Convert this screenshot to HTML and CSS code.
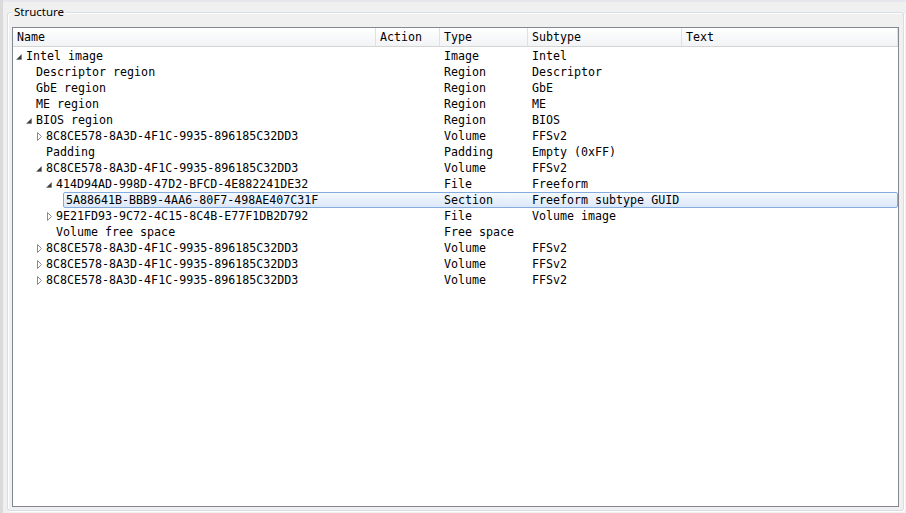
FILE: index.html
```html
<!DOCTYPE html>
<html>
<head>
<meta charset="utf-8">
<link rel="stylesheet" href="styles.css">
</head>
<body>
<div class="group">
  <span class="legend">Structure</span>
  <div class="tree">
    <div class="header">
      <div class="hcell">Name</div>
      <div class="hcell">Action</div>
      <div class="hcell">Type</div>
      <div class="hcell">Subtype</div>
      <div class="hcell">Text</div>
    </div>
    <div class="rows">
      <div class="row">
        <div class="cell name lv0"><span class="arrow"><svg width="10" height="16"><polygon class="open" points="0.5,11.5 5.5,6.5 5.5,11.5"/></svg></span>Intel image</div>
        <div class="cell"></div><div class="cell">Image</div><div class="cell">Intel</div><div class="cell"></div>
      </div>
      <div class="row">
        <div class="cell name lv1"><span class="arrow"></span>Descriptor region</div>
        <div class="cell"></div><div class="cell">Region</div><div class="cell">Descriptor</div><div class="cell"></div>
      </div>
      <div class="row">
        <div class="cell name lv1"><span class="arrow"></span>GbE region</div>
        <div class="cell"></div><div class="cell">Region</div><div class="cell">GbE</div><div class="cell"></div>
      </div>
      <div class="row">
        <div class="cell name lv1"><span class="arrow"></span>ME region</div>
        <div class="cell"></div><div class="cell">Region</div><div class="cell">ME</div><div class="cell"></div>
      </div>
      <div class="row">
        <div class="cell name lv1"><span class="arrow"><svg width="10" height="16"><polygon class="open" points="0.5,11.5 5.5,6.5 5.5,11.5"/></svg></span>BIOS region</div>
        <div class="cell"></div><div class="cell">Region</div><div class="cell">BIOS</div><div class="cell"></div>
      </div>
      <div class="row">
        <div class="cell name lv2"><span class="arrow"><svg width="10" height="16"><polygon class="closed" points="1.5,4.5 5.5,8.5 1.5,12.5"/></svg></span>8C8CE578-8A3D-4F1C-9935-896185C32DD3</div>
        <div class="cell"></div><div class="cell">Volume</div><div class="cell">FFSv2</div><div class="cell"></div>
      </div>
      <div class="row">
        <div class="cell name lv2"><span class="arrow"></span>Padding</div>
        <div class="cell"></div><div class="cell">Padding</div><div class="cell">Empty (0xFF)</div><div class="cell"></div>
      </div>
      <div class="row">
        <div class="cell name lv2"><span class="arrow"><svg width="10" height="16"><polygon class="open" points="0.5,11.5 5.5,6.5 5.5,11.5"/></svg></span>8C8CE578-8A3D-4F1C-9935-896185C32DD3</div>
        <div class="cell"></div><div class="cell">Volume</div><div class="cell">FFSv2</div><div class="cell"></div>
      </div>
      <div class="row">
        <div class="cell name lv3"><span class="arrow"><svg width="10" height="16"><polygon class="open" points="0.5,11.5 5.5,6.5 5.5,11.5"/></svg></span>414D94AD-998D-47D2-BFCD-4E882241DE32</div>
        <div class="cell"></div><div class="cell">File</div><div class="cell">Freeform</div><div class="cell"></div>
      </div>
      <div class="row selected">
        <div class="cell name lv4"><span class="arrow"></span>5A88641B-BBB9-4AA6-80F7-498AE407C31F</div>
        <div class="cell"></div><div class="cell">Section</div><div class="cell">Freeform subtype GUID</div><div class="cell"></div>
      </div>
      <div class="row">
        <div class="cell name lv3"><span class="arrow"><svg width="10" height="16"><polygon class="closed" points="1.5,4.5 5.5,8.5 1.5,12.5"/></svg></span>9E21FD93-9C72-4C15-8C4B-E77F1DB2D792</div>
        <div class="cell"></div><div class="cell">File</div><div class="cell">Volume image</div><div class="cell"></div>
      </div>
      <div class="row">
        <div class="cell name lv3"><span class="arrow"></span>Volume free space</div>
        <div class="cell"></div><div class="cell">Free space</div><div class="cell"></div><div class="cell"></div>
      </div>
      <div class="row">
        <div class="cell name lv2"><span class="arrow"><svg width="10" height="16"><polygon class="closed" points="1.5,4.5 5.5,8.5 1.5,12.5"/></svg></span>8C8CE578-8A3D-4F1C-9935-896185C32DD3</div>
        <div class="cell"></div><div class="cell">Volume</div><div class="cell">FFSv2</div><div class="cell"></div>
      </div>
      <div class="row">
        <div class="cell name lv2"><span class="arrow"><svg width="10" height="16"><polygon class="closed" points="1.5,4.5 5.5,8.5 1.5,12.5"/></svg></span>8C8CE578-8A3D-4F1C-9935-896185C32DD3</div>
        <div class="cell"></div><div class="cell">Volume</div><div class="cell">FFSv2</div><div class="cell"></div>
      </div>
      <div class="row">
        <div class="cell name lv2"><span class="arrow"><svg width="10" height="16"><polygon class="closed" points="1.5,4.5 5.5,8.5 1.5,12.5"/></svg></span>8C8CE578-8A3D-4F1C-9935-896185C32DD3</div>
        <div class="cell"></div><div class="cell">Volume</div><div class="cell">FFSv2</div><div class="cell"></div>
      </div>
    </div>
  </div>
</div>
</body>
</html>
```

FILE: styles.css
```css
html, body {
  margin: 0;
  padding: 0;
}
body {
  width: 906px;
  height: 513px;
  overflow: hidden;
  background: #f0f0f0;
  box-sizing: border-box;
  padding: 12px 0 0 7px;
  box-shadow: inset 3px 0 0 #dadada, inset 0 2px 0 #e6e6ee;
  font-family: "DejaVu Sans Mono", "Liberation Mono", monospace;
}
.group {
  position: relative;
  box-sizing: border-box;
  width: 897px;
  height: 499px;
  border: 1px solid #d5dfe5;
  border-radius: 3px;
  box-shadow: inset 1px 1px 0 #fff, 1px 1px 0 #fff;
  padding: 14px 0 0 4px;
}
.legend {
  position: absolute;
  left: 4px;
  top: -9px;
  padding: 0 2px;
  background: #f0f0f0;
  font-family: "Noto Sans", "Open Sans", sans-serif;
  font-size: 11.5px;
  line-height: 15px;
  color: #000;
}
.tree {
  box-sizing: border-box;
  width: 887px;
  height: 480px;
  border: 1px solid #828790;
  background: #fff;
  font-size: 11.65px;
  color: #000;
  overflow: hidden;
}
.header {
  display: grid;
  grid-template-columns: 363px 64px 88px 154px 216px;
  height: 19px;
  box-sizing: border-box;
  border-bottom: 1px solid #d5d5d5;
  background: linear-gradient(#ffffff, #f2f3f5);
}
.hcell {
  box-sizing: border-box;
  border-right: 1px solid #dfe0e2;
  padding-left: 4px;
  line-height: 18px;
  white-space: nowrap;
}
.rows {
  padding-top: 1px;
}
.row {
  position: relative;
  isolation: isolate;
  display: grid;
  grid-template-columns: 363px 64px 88px 154px 216px;
  height: 16px;
  line-height: 16px;
}
.row.selected::before {
  content: "";
  position: absolute;
  left: 50px;
  right: 0;
  top: 0;
  bottom: 0;
  z-index: -1;
  border: 1px solid #84acdd;
  border-radius: 2px;
  background: linear-gradient(#f5f9fe, #dbe8fa);
}
.cell {
  padding-left: 4px;
  white-space: nowrap;
}
.cell.name {
  display: flex;
  padding-left: 3px;
}
.name.lv1 { padding-left: 13px; }
.name.lv2 { padding-left: 23px; }
.name.lv3 { padding-left: 33px; }
.name.lv4 { padding-left: 43px; }
.arrow {
  flex: none;
  width: 10px;
  height: 16px;
}
.arrow svg {
  display: block;
}
.open {
  fill: #3c3c3c;
  stroke: #6a6a6a;
  stroke-width: 0.5;
}
.closed {
  fill: none;
  stroke: #8c8c8c;
  stroke-width: 1;
}
```
